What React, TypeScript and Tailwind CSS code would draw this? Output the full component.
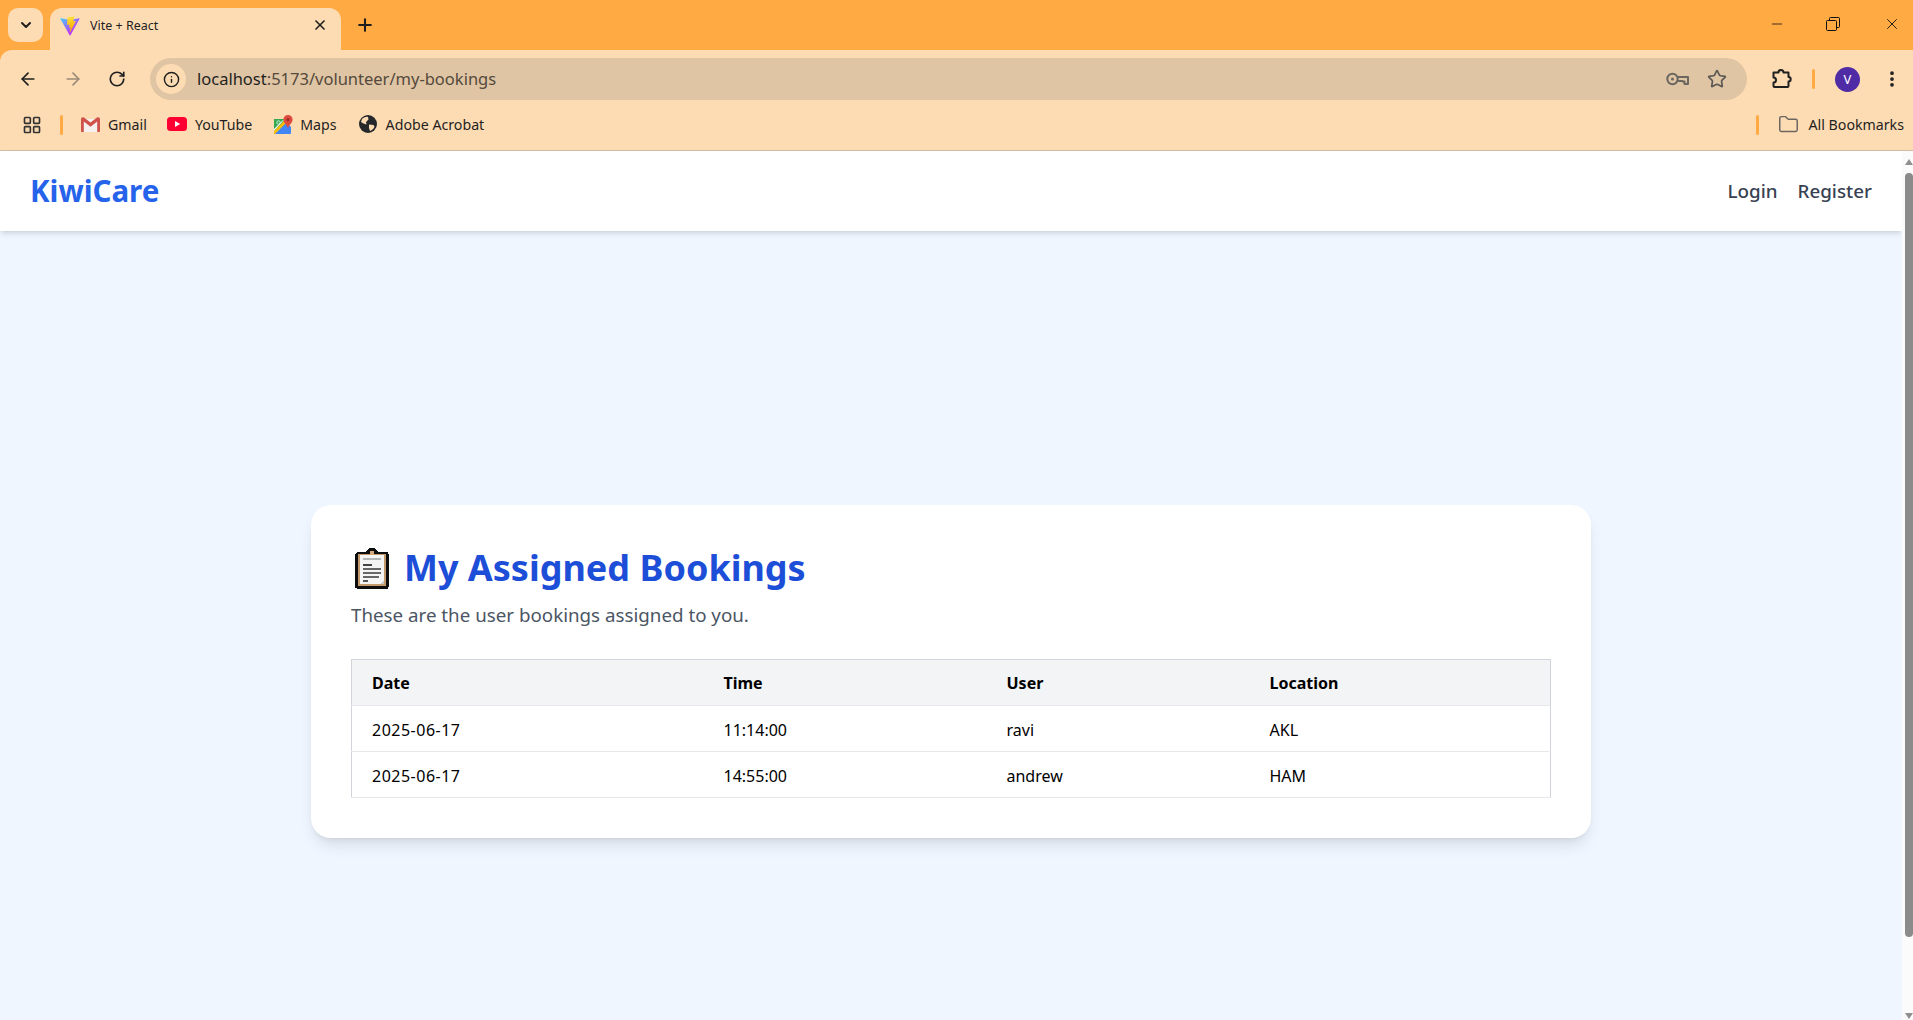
import { ArrowLeft, ArrowRight, RotateCw, Info, Star, Plus, X, ChevronDown, MoreVertical, Minus, Folder, LayoutGrid } from "lucide-react";

const rows = [
  ["2025-06-17", "11:14:00", "ravi", "AKL"],
  ["2025-06-17", "14:55:00", "andrew", "HAM"],
];

function ViteLogo() {
  return (
    <svg width="20" height="20" viewBox="0 0 410 404">
      <defs>
        <linearGradient id="va" x1="6" y1="33" x2="235" y2="344" gradientUnits="userSpaceOnUse">
          <stop stopColor="#41D1FF" />
          <stop offset="1" stopColor="#BD34FE" />
        </linearGradient>
        <linearGradient id="vb" x1="194" y1="8" x2="236" y2="292" gradientUnits="userSpaceOnUse">
          <stop stopColor="#FFEA83" />
          <stop offset="0.08" stopColor="#FFDD35" />
          <stop offset="1" stopColor="#FFA800" />
        </linearGradient>
      </defs>
      <path d="M399.6 59.5 215 389.6c-3.8 6.8-13.6 6.9-17.5.1L9.2 59.5c-4.2-7.4 2.1-16.3 10.5-14.8L204.5 77.7c1.2.2 2.4.2 3.6 0L389 44.8c8.3-1.5 14.7 7.3 10.6 14.7Z" fill="url(#va)" />
      <path d="M292.9 1.6 156.4 28.4c-2.2.4-3.9 2.3-4 4.6l-8.4 141.8c-.2 3.3 2.9 5.9 6.1 5.2l38-8.8c3.6-.8 6.8 2.3 6.1 5.9l-11.3 55.3c-.8 3.7 2.7 6.9 6.3 5.8l23.5-7.1c3.6-1.1 7.1 2.1 6.3 5.8l-17.9 86.9c-1.1 5.4 6.1 8.4 9.1 3.7l2-3.1 111.3-222.1c1.9-3.7-1.3-8-5.4-7.2l-39.1 7.5c-3.7.7-6.8-2.7-5.8-6.3l25.5-88.5c1-3.7-2.2-7.1-5.9-6.4Z" fill="url(#vb)" />
    </svg>
  );
}

function Gmail() {
  return (
    <svg width="19" height="15" viewBox="0 0 19 15">
      <path d="M1 2h17v12a1 1 0 0 1-1 1H2a1 1 0 0 1-1-1Z" fill="#f4f1ee" />
      <path d="M0 2.200C0 .6 1.700-.4 3 .6l6.500 5L16 .6c1.300-1 3-.1 3 1.600V14a1 1 0 0 1-1 1h-1.800V4.600L9.500 9.800 2.800 4.600V15H1a1 1 0 0 1-1-1Z" fill="#d0524b" />
    </svg>
  );
}

function YouTube() {
  return (
    <svg width="20" height="14" viewBox="0 0 20 14">
      <rect width="20" height="14" rx="3.500" fill="#ff0033" />
      <path d="M8 4v6l5.200-3Z" fill="#fff" />
    </svg>
  );
}

function Maps() {
  return (
    <svg width="19" height="19" viewBox="0 0 19 19">
      <path d="M0 4h12v15H1a1 1 0 0 1-1-1Z" fill="#35a853" />
      <path d="M0 18 12 7l5 5v6a1 1 0 0 1-1 1H1Z" fill="#4285f4" />
      <path d="M0 16 10 6l2 2L1 19H0Z" fill="#fbbc04" />
      <path d="M0 14 9 5h1L0 16Z" fill="#f4f4f4" />
      <circle cx="4.500" cy="7.500" r="1.700" fill="none" stroke="#d5f0dc" strokeWidth="1" />
      <path d="M14 0a4.600 4.600 0 0 1 4.600 4.600c0 3.200-3.400 4.800-4.600 9-1.200-4.200-4.600-5.800-4.600-9A4.600 4.600 0 0 1 14 0Z" fill="#dd4b3e" />
      <circle cx="14" cy="4.600" r="1.600" fill="#9e2f26" />
    </svg>
  );
}

function Globe() {
  return (
    <svg width="18" height="18" viewBox="0 0 18 18">
      <circle cx="9" cy="9" r="9" fill="#26272b" />
      <path d="M3 4c2-2 5-2.500 6-2l.5 2.500L7 7 7.500 9.500 4.500 8.500 2 7ZM10 9.500l4.500.5 1 1.500c-.5 2-2.500 3.800-4.500 4.500l-1-3Z" fill="#fedcb3" />
    </svg>
  );
}

function Extension() {
  return (
    <svg width="22" height="22" viewBox="0 0 22 22" fill="none" stroke="#1f1f1f" strokeWidth="2" strokeLinejoin="round">
      <path d="M2.500 4.500h5a2.500 2.500 0 0 1 5 0h5v4.500a2.200 2.200 0 0 1 0 4.400V18a1 1 0 0 1-1 1H3.500a1 1 0 0 1-1-1v-3.500a2.500 2.500 0 0 0 0-5Z" />
    </svg>
  );
}

function Key() {
  return (
    <svg width="23" height="14" viewBox="0 0 23 14" fill="none" stroke="#6b6660" strokeWidth="2" strokeLinejoin="round">
      <circle cx="6.500" cy="7" r="5.200" />
      <circle cx="6.500" cy="7" r="1.500" fill="#6b6660" stroke="none" />
      <path d="M11.700 5H22v7h-3.500V9.500h-2V9h-4.800" />
    </svg>
  );
}

function Restore() {
  return (
    <svg width="14" height="14" viewBox="0 0 14 14" fill="none" stroke="#111" strokeWidth="1">
      <rect x="0.500" y="3.500" width="10" height="10" rx="1" />
      <path d="M3.500 3.500V1.500a1 1 0 0 1 1-1h8a1 1 0 0 1 1 1v8a1 1 0 0 1-1 1h-2" />
    </svg>
  );
}

function Clipboard() {
  return (
    <svg width="34" height="41" viewBox="0 0 34 41" className="shrink-0" shapeRendering="crispEdges">
      <path d="M3 4h8c1-3 3-4 6-4s5 1 6 4h8c2 0 3 1 3 3v31c0 2-1 3-3 3H3c-2 0-3-1-3-3V7c0-2 1-3 3-3Z" fill="#0d0d0d" />
      <rect x="3" y="6" width="28" height="32" rx="1" fill="#c49a6c" />
      <rect x="5" y="7" width="24" height="29" fill="#f4f4f4" />
      <path d="M25 36h4v-4Z" fill="#c9c9c9" />
      <rect x="15" y="3" width="4" height="4" fill="#d9a878" />
      <rect x="8" y="10" width="18" height="1.500" fill="#b5b5b5" />
      <rect x="8" y="16" width="9" height="1.500" fill="#444" />
      <rect x="8" y="20" width="18" height="1.500" fill="#666" />
      <rect x="8" y="24" width="18" height="1.500" fill="#666" />
      <rect x="8" y="28" width="16" height="1.500" fill="#666" />
      <rect x="8" y="32" width="5" height="1.500" fill="#555" />
    </svg>
  );
}

export default function App() {
  return (
    <div className="h-[1020px] w-[1913px] overflow-hidden flex flex-col bg-[#eff6ff] font-['Noto_Sans','Open_Sans',sans-serif]">
      {/* Tab strip */}
      <div className="h-[50px] shrink-0 bg-[#ffaa42] flex items-start pl-2 pt-2 text-[#1f1f1f]">
        <div className="w-[35px] h-[34px] rounded-[10px] bg-[#fedcb3] flex items-center justify-center">
          <ChevronDown size={16} strokeWidth={3} />
        </div>
        <div className="ml-[7px] w-[291px] h-[42px] rounded-t-[12px] bg-[#fedcb3] flex items-start pt-[8px] pl-[10px]">
          <ViteLogo />
          <span className="ml-[10px] text-[12.500px] leading-[20px] w-[220px]">Vite + React</span>
          <X size={16} strokeWidth={2.500} className="mt-[1px] ml-[2px]" />
        </div>
        <Plus size={20} strokeWidth={2.500} className="ml-[14px] mt-[7px]" />
        <div className="ml-auto flex items-center h-[30px] mr-[12px] mt-[1px]">
          <Minus size={16} strokeWidth={1.200} className="text-[#111]" />
          <div className="ml-[41px] w-[14px]"><Restore /></div>
          <X size={18} strokeWidth={1.200} className="ml-[43px] text-[#111]" />
        </div>
      </div>

      {/* Toolbar */}
      <div className="h-[50px] shrink-0 bg-[#ffaa42]">
        <div className="h-full bg-[#fedcb3] rounded-tl-[12px] flex items-start pt-2 text-[#1f1f1f]">
          <ArrowLeft size={20} strokeWidth={2} className="ml-[18px] mt-[11px]" />
          <ArrowRight size={20} strokeWidth={2} className="ml-[25px] mt-[11px] text-[#9a8a78]" />
          <RotateCw size={18} strokeWidth={2.200} className="ml-[25px] mt-[12px]" />
          <div className="ml-[24px] w-[1597px] h-[42px] rounded-full bg-[#dfc5a3] flex items-center pl-[6px]">
            <div className="w-[30px] h-[30px] rounded-full bg-[#fedcb3] flex items-center justify-center">
              <Info size={17} strokeWidth={2} />
            </div>
            <span className="ml-[11px] text-[16.500px] text-[#1f1f1f] pt-[1px]">
              localhost<span className="text-[#55493c]">:5173/volunteer/my-bookings</span>
            </span>
            <div className="ml-auto flex items-center mr-[20px]">
              <Key />
              <Star size={20} strokeWidth={2} className="ml-[18px] text-[#5c5954]" />
            </div>
          </div>
          <div className="ml-[24px] mt-[10px]"><Extension /></div>
          <div className="ml-[19px] mt-[11px] w-[3px] h-[20px] bg-[#ffaa42] rounded-full" />
          <div className="ml-[20px] mt-[9px] w-[25px] h-[25px] rounded-full bg-[#4f2ba6] text-white text-[13px] flex items-center justify-center">V</div>
          <MoreVertical size={20} strokeWidth={2.500} className="ml-[22px] mt-[11px]" />
        </div>
      </div>

      {/* Bookmarks */}
      <div className="h-[51px] shrink-0 bg-[#fedcb3] border-b border-[#d2bda0] pb-[1px] flex items-center text-[14.200px] text-[#1f1f1f]">
        <LayoutGrid size={20} strokeWidth={2} className="ml-[22px] text-[#333]" />
        <div className="ml-[18px] w-[3px] h-[20px] bg-[#ffaa42] rounded-full" />
        <div className="ml-[18px] flex items-center gap-[8px]"><Gmail /><span>Gmail</span></div>
        <div className="ml-[20px] flex items-center gap-[8px]"><YouTube /><span>YouTube</span></div>
        <div className="ml-[22px] flex items-center gap-[7px]"><Maps /><span>Maps</span></div>
        <div className="ml-[22px] flex items-center gap-[9px]"><Globe /><span>Adobe Acrobat</span></div>
        <div className="ml-auto w-[3px] h-[20px] bg-[#ffaa42] rounded-full" />
        <Folder size={21} strokeWidth={1.700} className="ml-[19px] text-[#6b6660]" />
        <span className="ml-[10px] mr-[9px]">All Bookmarks</span>
      </div>

      {/* Viewport */}
      <div className="flex-1 min-h-0 flex">
        <div className="flex-1 min-w-0 flex flex-col">
          <nav className="h-[80px] shrink-0 bg-white shadow-md flex items-center justify-between px-[30px] pt-[1px] relative">
            <span className="text-[29.500px] font-bold text-[#2563eb]">KiwiCare</span>
            <div className="flex gap-5 text-[18.800px] font-medium text-[#374151]">
              <span>Login</span>
              <span>Register</span>
            </div>
          </nav>
          <main className="h-[881px] shrink-0 flex items-center justify-center">
            <div className="w-[1280px] bg-white rounded-[20px] shadow-lg p-10">
              <h1 className="flex items-center h-[47px] mb-2 text-[36px] font-bold text-[#1d4ed8] pl-[4px]">
                <Clipboard />
                <span className="ml-[15px] pb-[2px]">My Assigned Bookings</span>
              </h1>
              <p className="pt-[1px] text-[18.750px] leading-[28px] text-[#4b5563] mb-[30px]">These are the user bookings assigned to you.</p>
              <table className="w-[1199px] table-fixed border-collapse border border-[#d1d5db] text-[16px] text-black text-left">
                <colgroup>
                  <col className="w-[352px]" />
                  <col className="w-[283px]" />
                  <col className="w-[263px]" />
                  <col className="w-[301px]" />
                </colgroup>
                <thead className="bg-[#f3f4f6]">
                  <tr className="h-[46px] border-b border-[#e5e7eb]">
                    <th className="px-5 pt-[1px] font-bold">Date</th>
                    <th className="px-5 pt-[1px] font-bold">Time</th>
                    <th className="px-5 pt-[1px] font-bold">User</th>
                    <th className="px-5 pt-[1px] font-bold">Location</th>
                  </tr>
                </thead>
                <tbody>
                  {rows.map((r, i) => (
                    <tr key={i} className="h-[46px] border-b border-[#e5e7eb]">
                      {r.map((c, j) => (
                        <td key={j} className={j === 0 ? "px-5 pt-[2px] tracking-[0.5px]" : "px-5 pt-[2px]"}>{c}</td>
                      ))}
                    </tr>
                  ))}
                </tbody>
              </table>
            </div>
          </main>
        </div>
        {/* Scrollbar */}
        <div className="w-[11px] shrink-0 bg-[#fbfbfb] flex flex-col relative">
          <div className="mt-[8px] ml-[3px] w-0 h-0 border-x-[4px] border-x-transparent border-b-[6px] border-b-[#8f8f8f]" />
          <div className="mt-[8px] ml-[3px] w-[8px] h-[764px] rounded-[4px] bg-[#8b8b8b]" />
          <div className="mt-auto mb-[1px] ml-[3px] w-0 h-0 border-x-[4px] border-x-transparent border-t-[6px] border-t-[#8f8f8f]" />
        </div>
      </div>
    </div>
  );
}
